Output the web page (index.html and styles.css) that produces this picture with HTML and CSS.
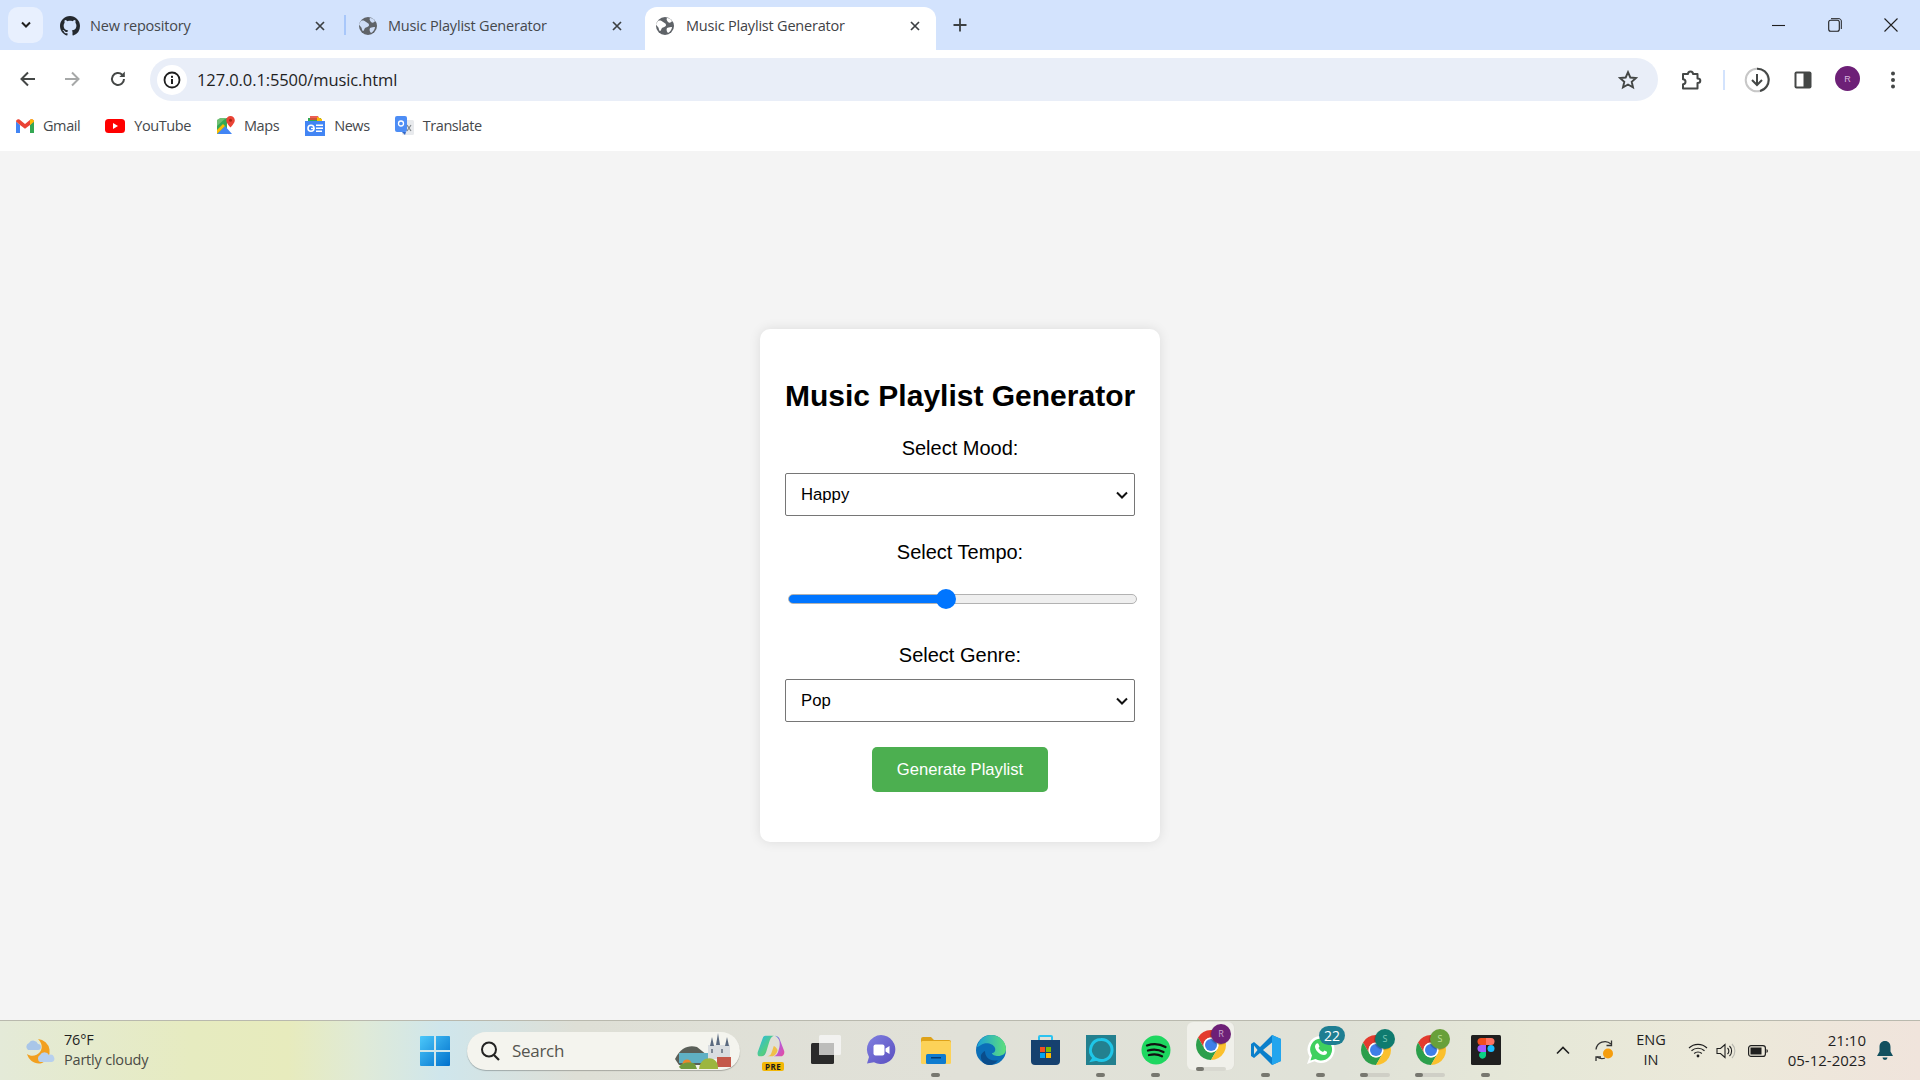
FILE: index.html
```html
<!DOCTYPE html>
<html lang="en">
<head>
<meta charset="utf-8">
<title>Music Playlist Generator</title>
<link rel="stylesheet" href="styles.css">
</head>
<body>
<svg class="defs" width="0" height="0">
  <symbol id="globe" viewBox="0 0 20 20">
    <circle cx="10" cy="10" r="9" fill="#5f6368"/>
    <path d="M3 5c2-1 4 0 5 1s3 1 3 3-3 2-4 3-1 3-2 3-1-3-2-4-2-2-2-3zM12 2c2 0 4 1 5 3-1 2-3 2-4 1s-2-3-1-4zM12 12c2-1 4-1 5-1 0 2-2 5-4 6-1-1-2-3-1-5z" fill="#d3e3fd" opacity=".95"/>
  </symbol>
  <symbol id="globe-w" viewBox="0 0 20 20">
    <circle cx="10" cy="10" r="9" fill="#5f6368"/>
    <path d="M3 5c2-1 4 0 5 1s3 1 3 3-3 2-4 3-1 3-2 3-1-3-2-4-2-2-2-3zM12 2c2 0 4 1 5 3-1 2-3 2-4 1s-2-3-1-4zM12 12c2-1 4-1 5-1 0 2-2 5-4 6-1-1-2-3-1-5z" fill="#fff"/>
  </symbol>
  <symbol id="x" viewBox="0 0 12 12">
    <path d="M2 2l8 8M10 2l-8 8" stroke="#3c4043" stroke-width="1.7" fill="none"/>
  </symbol>
  <symbol id="chrome" viewBox="4 4 40 40">
    <path d="M24 4A20 20 0 0 1 41.32 14H24A10 10 0 0 0 15.34 29L6.68 14A20 20 0 0 1 24 4Z" fill="#e33b2e"/>
    <path d="M6.68 14A20 20 0 0 0 24 44L32.66 29A10 10 0 0 1 15.34 29Z" fill="#2c9f4b"/>
    <path d="M41.32 14A20 20 0 0 1 24 44L32.66 29A10 10 0 0 0 24 14Z" fill="#fbc02d"/>
    <circle cx="24" cy="24" r="10" fill="#fff"/>
    <circle cx="24" cy="24" r="8" fill="#3f7fe8"/>
  </symbol>
</svg>

<header class="tabstrip">
  <button class="tab-search" type="button" aria-label="Search tabs">
    <svg width="12" height="8" viewBox="0 0 12 8"><path d="M2 1.500l4 4 4-4" stroke="#1f1f1f" stroke-width="2" fill="none"/></svg>
  </button>
  <div class="tab tab-first">
    <svg class="favicon" width="20" height="20" viewBox="0 0 16 16"><path fill="#24292f" d="M8 0C3.58 0 0 3.58 0 8c0 3.54 2.29 6.53 5.47 7.59.4.07.55-.17.55-.38 0-.19-.01-.82-.01-1.49-2.01.37-2.53-.49-2.69-.94-.09-.23-.48-.94-.82-1.13-.28-.15-.68-.52-.01-.53.63-.01 1.08.58 1.23.82.72 1.21 1.87.87 2.33.66.07-.52.28-.87.51-1.07-1.78-.2-3.64-.89-3.64-3.95 0-.87.31-1.59.82-2.15-.08-.2-.36-1.02.08-2.12 0 0 .67-.21 2.2.82.64-.18 1.32-.27 2-.27s1.36.09 2 .27c1.53-1.04 2.2-.82 2.2-.82.44 1.1.16 1.92.08 2.12.51.56.82 1.27.82 2.15 0 3.07-1.87 3.75-3.65 3.95.29.25.54.73.54 1.48 0 1.07-.01 1.93-.01 2.2 0 .21.15.46.55.38A8.01 8.01 0 0 0 16 8c0-4.42-3.58-8-8-8z"/></svg>
    <span class="tab-title">New repository</span>
    <svg class="tab-close" width="12" height="12"><use href="#x"/></svg>
  </div>
  <i class="tab-sep"></i>
  <div class="tab tab-second">
    <svg class="favicon" width="20" height="20"><use href="#globe"/></svg>
    <span class="tab-title">Music Playlist Generator</span>
    <svg class="tab-close" width="12" height="12"><use href="#x"/></svg>
  </div>
  <div class="tab tab-active">
    <svg class="favicon" width="20" height="20"><use href="#globe-w"/></svg>
    <span class="tab-title">Music Playlist Generator</span>
    <svg class="tab-close" width="12" height="12"><use href="#x"/></svg>
  </div>
  <svg class="new-tab" width="16" height="16" viewBox="0 0 16 16"><path d="M8 1.500v13M1.500 8h13" stroke="#3c4043" stroke-width="1.800"/></svg>
  <div class="window-controls">
    <svg width="14" height="14" viewBox="0 0 14 14"><path d="M0 7.500h13" stroke="#1f1f1f" stroke-width="1.100"/></svg>
    <svg width="14" height="14" viewBox="0 0 14 14"><rect x=".7" y="2.200" width="10.600" height="11" rx="2" fill="none" stroke="#1f1f1f" stroke-width="1.100"/><path d="M3 .7h8c1.300 0 2.300 1 2.300 2.300v8" fill="none" stroke="#1f1f1f" stroke-width="1"/></svg>
    <svg width="14" height="14" viewBox="0 0 14 14"><path d="M.5.5l13 13M13.500.5l-13 13" stroke="#1f1f1f" stroke-width="1.100"/></svg>
  </div>
</header>

<nav class="toolbar">
  <svg class="nav-btn" width="18" height="18" viewBox="0 0 18 18"><path d="M16 9H3M9 2.500L2.500 9 9 15.500" stroke="#444746" stroke-width="2" fill="none"/></svg>
  <svg class="nav-btn" width="18" height="18" viewBox="0 0 18 18"><path d="M2 9h13M9 2.500L15.500 9 9 15.500" stroke="#a6a8a8" stroke-width="2" fill="none"/></svg>
  <svg class="nav-btn" width="18" height="18" viewBox="0 0 18 18"><path d="M15 9a6 6 0 1 1-1.800-4.300" stroke="#444746" stroke-width="2" fill="none"/><path d="M15.800 1.500v5.500h-5.500z" fill="#444746"/></svg>
  <div class="omnibox">
    <span class="site-info">
      <svg width="18" height="18" viewBox="0 0 18 18"><circle cx="9" cy="9" r="7.500" fill="none" stroke="#1f1f1f" stroke-width="1.800"/><rect x="8" y="8" width="2" height="5" fill="#1f1f1f"/><rect x="8" y="4.800" width="2" height="2" fill="#1f1f1f"/></svg>
    </span>
    <span class="url">127.0.0.1:5500/music.html</span>
    <svg class="star" width="20" height="20" viewBox="0 0 20 20"><path d="M10 2.200l2.300 5.300 5.700.5-4.300 3.800 1.300 5.600L10 14.500 5 17.400l1.300-5.600L2 8l5.700-.5z" fill="none" stroke="#444746" stroke-width="1.900"/></svg>
  </div>
  <div class="toolbar-actions">
    <svg class="act-puzzle" width="22" height="22" viewBox="0 0 22 22"><path d="M3 5h5c0-1.500.8-2.500 2.500-2.500S13 3.500 13 5h4.500v4.500c1.800 0 2.800 1 2.800 2.300s-1 2.300-2.800 2.300V19.500H3v-4.300c1.700 0 2.500-1 2.500-2.400S4.700 10.300 3 10.300z" fill="none" stroke="#444746" stroke-width="2" stroke-linejoin="round"/></svg>
    <i class="act-sep"></i>
    <svg class="act-dl" width="26" height="26" viewBox="0 0 26 26"><circle cx="13" cy="13" r="11.300" fill="none" stroke="#c7c7c7" stroke-width="2"/><path d="M13 1.700A11.300 11.300 0 0 1 16 24" fill="none" stroke="#444746" stroke-width="2"/><path d="M13 7v11M8 13l5 5 5-5" fill="none" stroke="#444746" stroke-width="2"/></svg>
    <svg class="act-panel" width="18" height="18" viewBox="0 0 18 18"><rect x=".5" y=".5" width="17" height="17" rx="2" fill="#444746"/><rect x="2.500" y="2.500" width="7" height="13" fill="#fff"/></svg>
    <span class="avatar">R</span>
    <svg class="act-menu" width="6" height="20" viewBox="0 0 6 20"><circle cx="3" cy="3.500" r="2" fill="#444746"/><circle cx="3" cy="10" r="2" fill="#444746"/><circle cx="3" cy="16.500" r="2" fill="#444746"/></svg>
  </div>
</nav>

<div class="bookmarks">
  <a class="bm bm-gmail">
    <svg width="18" height="14" viewBox="0 0 18 14"><path d="M0 2.500V14h4V6z" fill="#4285f4"/><path d="M18 2.500V14h-4V6z" fill="#34a853"/><path d="M0 2.500C0 .5 2 -.5 3.500.6L9 5l5.500-4.400C16-.5 18 .5 18 2.500L14 6 9 9.800 4 6z" fill="#ea4335"/><path d="M14 .9l.5-.3C16-.5 18 .5 18 2.500L14 6z" fill="#fbbc04"/></svg>
    <span>Gmail</span>
  </a>
  <a class="bm bm-yt">
    <svg width="20" height="14" viewBox="0 0 20 14"><rect width="20" height="14" rx="3.500" fill="#f00"/><path d="M8 4l5 3-5 3z" fill="#fff"/></svg>
    <span>YouTube</span>
  </a>
  <a class="bm bm-maps">
    <svg width="18" height="20" viewBox="0 0 18 20"><path d="M0 4l10-2v16H0z" fill="#34a853"/><path d="M0 18l8-8 7 8z" fill="#4285f4"/><path d="M0 18V14l6-6 2 2z" fill="#fbbc04"/><path d="M3 2h6L0 10V4z" fill="#6fbf73"/><path d="M13.500 0a4.300 4.300 0 0 1 4.300 4.300c0 3-4.300 7.200-4.300 7.200S9.200 7.300 9.200 4.300A4.300 4.300 0 0 1 13.500 0z" fill="#ea4335"/><circle cx="13.500" cy="4.300" r="1.500" fill="#a52714"/></svg>
    <span>Maps</span>
  </a>
  <a class="bm bm-news">
    <svg width="20" height="20" viewBox="0 0 20 20"><path d="M3 2h13v5H3z" fill="#34a853"/><path d="M5 0h8l2 4H5z" fill="#ea4335" opacity=".85"/><path d="M12 1l5 2v4h-5z" fill="#fbbc04"/><rect y="5" width="20" height="15" fill="#4285f4"/><rect x="11" y="8.500" width="7" height="1.500" fill="#fff"/><rect x="11" y="11.500" width="7" height="1.500" fill="#fff"/><rect x="11" y="14.500" width="6" height="1.500" fill="#fff"/><circle cx="6" cy="12.300" r="3" fill="none" stroke="#fff" stroke-width="1.600"/><rect x="6" y="11.800" width="3.500" height="1.300" fill="#fff"/></svg>
    <span>News</span>
  </a>
  <a class="bm bm-translate">
    <svg width="19" height="20" viewBox="0 0 19 20"><rect x="7" y="4" width="12" height="15" rx="1.500" fill="#e8eaed"/><rect width="12" height="16" rx="2" fill="#4d8df5"/><path d="M7 16l3 3 1-3z" fill="#3367c6"/><circle cx="6" cy="7.500" r="2.500" fill="none" stroke="#fff" stroke-width="1.300"/><path d="M12 9l4 6M16 9l-4 6" stroke="#80868b" stroke-width="1.200"/></svg>
    <span>Translate</span>
  </a>
</div>

<main class="page">
  <section class="card">
    <h1 class="card-title">Music Playlist Generator</h1>
    <label class="field-label label-mood" for="mood">Select Mood:</label>
    <select class="field-select" id="mood"><option>Happy</option><option>Sad</option><option>Energetic</option></select>
    <label class="field-label label-tempo" for="tempo">Select Tempo:</label>
    <input class="tempo-range" id="tempo" type="range" min="0" max="100" value="45">
    <label class="field-label label-genre" for="genre">Select Genre:</label>
    <select class="field-select" id="genre"><option>Pop</option><option>Rock</option><option>Jazz</option></select>
    <button class="generate" type="button">Generate Playlist</button>
  </section>
</main>

<footer class="taskbar">
  <div class="weather">
    <svg width="32" height="30" viewBox="0 0 32 30"><path d="M14 3a12.500 12.500 0 0 1 4 24C12 29 5 25 3 18c4 3 10 2 13-2s2-9-2-13z" fill="#f2a01f"/><path d="M4 14a4 4 0 0 1 1-7 5 5 0 0 1 9 1 3 3 0 0 1 0 6z" fill="#a9c6e8"/><path d="M16 26a4 4 0 0 1 0-7 5 5 0 0 1 9 0 3.500 3.500 0 0 1 3 7z" fill="#b7d0ee"/></svg>
    <div class="weather-text">
      <span class="temp">76°F</span>
      <span class="cond">Partly cloudy</span>
    </div>
  </div>
  <svg class="winlogo" width="30" height="30" viewBox="0 0 30 30"><defs><linearGradient id="wl" x1="0" y1="0" x2="1" y2="1"><stop offset="0" stop-color="#4cc8fa"/><stop offset="1" stop-color="#0070cc"/></linearGradient></defs><path d="M1 0h13v14H0V1a1 1 0 0 1 1-1zM16 0h13a1 1 0 0 1 1 1v13H16zM0 16h14v14H1a1 1 0 0 1-1-1zM16 16h14v13a1 1 0 0 1-1 1H16z" fill="url(#wl)"/></svg>
  <div class="search">
    <svg width="22" height="22" viewBox="0 0 22 22"><circle cx="10" cy="9.500" r="7" fill="none" stroke="#222" stroke-width="2"/><path d="M15 15l5 5" stroke="#222" stroke-width="2.200"/></svg>
    <span class="search-text">Search</span>
    <svg class="search-art" width="64" height="36" viewBox="0 0 64 36"><path d="M0 26c6-12 14-14 22-12l10 8v10H4z" fill="#5a5f58"/><rect x="4" y="20" width="30" height="10" fill="#5fb0c4"/><rect x="33" y="12" width="22" height="14" fill="#d9dde0"/><path d="M35 13l2-9 2 9zM41 12l2-12 2 12zM50 13l2-9 2 9z" fill="#5a6a80"/><rect x="36" y="16" width="2" height="4" fill="#7d8794"/><rect x="46" y="16" width="2" height="4" fill="#7d8794"/><rect x="42" y="24" width="14" height="10" fill="#c4584a"/><path d="M24 36c1-10 9-12 14-10s5 8 5 10z" fill="#9cb63f"/><circle cx="12" cy="31" r="4.500" fill="#e8872b"/><path d="M4 34c2-4 10-6 16-3l2 5H6z" fill="#6f9a3c"/></svg>
  </div>
  <div class="apps">
    <div class="app">
      <svg class="copilot" width="28" height="22" viewBox="0 0 30 22"><defs><linearGradient id="cpl" x1="0" y1="0" x2="1" y2="1"><stop offset="0" stop-color="#28b8ea"/><stop offset=".6" stop-color="#55cf7f"/><stop offset="1" stop-color="#2a7fd0"/></linearGradient><linearGradient id="cpr" x1="0" y1="0" x2="1" y2="1"><stop offset="0" stop-color="#2f8fe0"/><stop offset=".5" stop-color="#b85ad8"/><stop offset="1" stop-color="#e84c9c"/></linearGradient></defs><path d="M9 0h9c-3 1-4 4-5 7l-3 10c-1 3-2 5-5 5H3c-2 0-3-2-2-5L6 3c.5-2 1.500-3 3-3z" fill="url(#cpl)"/><path d="M19 0c2 0 4 1 5 3l5 13c1 3-1 6-3 6h-8c3-1 4-3 5-6l1-4c1-5 0-10-5-12z" fill="url(#cpr)"/><path d="M11 22c3 0 4-2 5-5l2-6c2 1 4 3 4 5-1 3-3 6-6 6z" fill="#f0c04a"/></svg>
      <span class="pre-badge">PRE</span>
    </div>
    <div class="app">
      <svg width="30" height="30" viewBox="0 0 30 30"><rect x="8" y="0" width="22" height="20" rx="1.500" fill="#f2f2f0"/><rect x="0" y="8" width="23" height="21" rx="1.500" fill="#2a2a2a"/><rect x="8" y="8" width="15" height="12" fill="#bdbdbb"/></svg>
    </div>
    <div class="app">
      <svg width="30" height="30" viewBox="0 0 30 30"><defs><linearGradient id="ch" x1="0" y1="0" x2="1" y2="1"><stop offset="0" stop-color="#7f7fe0"/><stop offset="1" stop-color="#5b4fc0"/></linearGradient></defs><path d="M15 0a14.500 14.500 0 1 1-7 27.300L1 28.500 3 22A14.500 14.500 0 0 1 15 0z" fill="url(#ch)"/><rect x="7.500" y="9.500" width="11" height="11" rx="2" fill="#fff"/><path d="M19.500 13.500l4-2.500v8l-4-2.500z" fill="#fff"/></svg>
    </div>
    <div class="app has-dot">
      <svg width="30" height="27" viewBox="0 0 30 27"><path d="M0 2a2 2 0 0 1 2-2h8l3 3h15a2 2 0 0 1 2 2v3H0z" fill="#dea219"/><rect y="4" width="30" height="23" rx="1.500" fill="#fcd258"/><rect x="5" y="17" width="20" height="10" rx="1.500" fill="#0f7ccf"/><rect x="10" y="20" width="10" height="1.500" fill="#053c73"/></svg>
    </div>
    <div class="app">
      <svg width="30" height="30" viewBox="0 0 30 30"><defs><linearGradient id="ed" x1="0" y1="0" x2="1" y2="0"><stop offset="0" stop-color="#1aa0d8"/><stop offset="1" stop-color="#5ee07a"/></linearGradient></defs><circle cx="15" cy="15" r="15" fill="#0b6fb8"/><path d="M1 12C3 4 9 0 15 0c9 0 15 7 15 14 0 5-4 7-8 7-3 0-6-1-6-3 2 0 4-2 3-5-2-5-10-6-14-3-2 1-3 2-4 2z" fill="url(#ed)"/><path d="M9 16c0 7 6 11 13 9-2 3-5 5-9 5-6 0-9-6-8-10 1-2 2-3 4-4z" fill="#0a4d8c"/></svg>
    </div>
    <div class="app">
      <svg width="29" height="30" viewBox="0 0 29 30"><path d="M8 5V2a1 1 0 0 1 1-1h11a1 1 0 0 1 1 1v3" fill="none" stroke="#2cc3f0" stroke-width="2"/><path d="M0 5h29v21a4 4 0 0 1-4 4H4a4 4 0 0 1-4-4z" fill="#16416f"/><rect x="9" y="12" width="5" height="5" fill="#f25022"/><rect x="15" y="12" width="5" height="5" fill="#7fba00"/><rect x="9" y="18" width="5" height="5" fill="#00a4ef"/><rect x="15" y="18" width="5" height="5" fill="#ffb900"/></svg>
    </div>
    <div class="app has-dot">
      <svg width="30" height="30" viewBox="0 0 30 30"><rect width="30" height="30" fill="#23808f"/><path d="M15 4.500a10.500 10.500 0 0 0-7 18.300L6.500 25l4-.8A10.500 10.500 0 1 0 15 4.500z" fill="none" stroke="#1fc6e8" stroke-width="3"/></svg>
    </div>
    <div class="app has-dot">
      <svg width="30" height="30" viewBox="0 0 30 30"><circle cx="15" cy="15" r="14.500" fill="#1ed760"/><path d="M6 10.500c6-2 13-1.500 18.500 1.500M7 15.500c5-1.500 11-1 15.500 1.500M8 20c4-1 9-1 13 1.200" fill="none" stroke="#111" stroke-width="2.300" stroke-linecap="round"/></svg>
    </div>
    <div class="app app-active has-track">
      <svg width="30" height="30"><use href="#chrome"/></svg>
      <span class="win-badge badge-purple">R</span>
    </div>
    <div class="app has-dot">
      <svg width="30" height="30" viewBox="0 0 30 30"><path d="M21 0l9 4v22l-9 4L9 18l-6 5-3-2v-12l3-2 6 5z" fill="#0a7fcb"/><path d="M21 0l9 4v22l-9 4z" fill="#22a5ee"/><path d="M21 7.500v15L12 15z" fill="#e2e2d9"/><path d="M3 10.500L6.500 15 3 19.500z" fill="#e2e2d9"/></svg>
    </div>
    <div class="app has-dot">
      <svg width="30" height="30" viewBox="0 0 30 30"><path d="M15 1a13.500 13.500 0 1 1-6.500 25.300L1 29l2.600-7.300A13.500 13.500 0 0 1 15 1z" fill="#fff"/><path d="M15 3.500a11 11 0 1 1-5.500 20.500l-5 1.400L6 20.500A11 11 0 0 1 15 3.500z" fill="#3fd05f"/><path d="M10 9c1-1 2-1 2.500 0l1 2.500-1 1.500c1 2 2.500 3 4.500 4l1.500-1.500 2.500 1.200c.5 2-1.500 3.300-3 3.300-4.500 0-9-5-9-8.500 0-1 .4-1.800 1-2.500z" fill="#fff"/></svg>
      <span class="count-badge">22</span>
    </div>
    <div class="app has-track">
      <svg width="30" height="30"><use href="#chrome"/></svg>
      <span class="win-badge badge-teal">S</span>
    </div>
    <div class="app has-track">
      <svg width="30" height="30"><use href="#chrome"/></svg>
      <span class="win-badge badge-green">S</span>
    </div>
    <div class="app has-dot">
      <svg width="30" height="30" viewBox="0 0 30 30"><rect width="30" height="30" rx="1.500" fill="#1f1f1f"/><path d="M10 3h5v7h-5a3.500 3.500 0 0 1 0-7z" fill="#f24e1e"/><path d="M15 3h5a3.500 3.500 0 0 1 0 7h-5z" fill="#ff7262"/><path d="M10 10h5v7h-5a3.500 3.500 0 0 1 0-7z" fill="#a259ff"/><circle cx="20" cy="13.500" r="3.500" fill="#1abcfe"/><path d="M10 17h5v3.500a3.500 3.500 0 1 1-5-3.500z" fill="#0acf83"/></svg>
    </div>
  </div>
  <div class="tray">
    <svg class="tray-up" width="14" height="9" viewBox="0 0 14 9"><path d="M1 7.500l6-6 6 6" fill="none" stroke="#1f1f1f" stroke-width="1.600"/></svg>
    <svg class="tray-sync" width="22" height="22" viewBox="0 0 22 22"><path d="M3 9.500A9 9 0 0 1 18 4" fill="none" stroke="#333" stroke-width="1.300"/><path d="M18.500.500V5.500h-5M3 21v-4h5" fill="none" stroke="#333" stroke-width="1.300"/><path d="M4 17a9 9 0 0 0 8 1" fill="none" stroke="#333" stroke-width="1.300"/><circle cx="15" cy="13.500" r="5" fill="#f59d0e"/></svg>
    <div class="lang"><span>ENG</span><span>IN</span></div>
    <svg class="tray-wifi" width="20" height="15" viewBox="0 0 20 15"><path d="M1 5a13 13 0 0 1 18 0M3.500 7.800a9.500 9.500 0 0 1 13 0M6.200 10.500a5.500 5.500 0 0 1 7.600 0" fill="none" stroke="#1f1f1f" stroke-width="1.200"/><circle cx="10" cy="13" r="1.400" fill="#1f1f1f"/></svg>
    <svg class="tray-vol" width="20" height="16" viewBox="0 0 20 16"><path d="M1 5.500h3.500L9 1.500v13l-4.500-4H1z" fill="none" stroke="#1f1f1f" stroke-width="1.100"/><path d="M11.500 5a4 4 0 0 1 0 6M13.500 3a7 7 0 0 1 0 10" fill="none" stroke="#1f1f1f" stroke-width="1.100"/><path d="M16 1a10 10 0 0 1 0 14" fill="none" stroke="#b8b8b0" stroke-width="1.100"/></svg>
    <svg class="tray-bat" width="20" height="12" viewBox="0 0 20 12"><rect x=".6" y=".6" width="16.800" height="10.800" rx="2.500" fill="none" stroke="#1f1f1f" stroke-width="1.200"/><rect x="2.500" y="2.500" width="11" height="7" fill="#1f1f1f"/><path d="M18.500 4l1.300 1v2l-1.300 1z" fill="#1f1f1f"/></svg>
    <div class="clock"><span>21:10</span><span>05-12-2023</span></div>
    <svg class="tray-bell" width="18" height="20" viewBox="0 0 18 20"><path d="M9 0c3.500 0 5.500 2.500 5.500 6v4.500L17 15H1l2.500-4.500V6C3.500 2.500 5.500 0 9 0z" fill="#12505f"/><path d="M6.500 16.500h5a2.500 2.500 0 0 1-5 0z" fill="#12505f"/></svg>
  </div>
</footer>
</body>
</html>
```
FILE: styles.css
```css
* { box-sizing: border-box; }
html, body { height: 100%; }
body {
  margin: 0;
  height: 1080px;
  overflow: hidden;
  display: flex;
  flex-direction: column;
  font-family: "Liberation Sans", Arial, sans-serif;
  background: #f4f4f4;
}
.defs { position: absolute; }

/* tab strip */
.tabstrip {
  height: 50px;
  flex: none;
  display: flex;
  align-items: center;
  background: #d3e3fd;
  font-family: "Open Sans", sans-serif;
  font-size: 14.500px;
  letter-spacing: -.2px;
  color: #45484c;
}
.tab-search {
  width: 35px;
  height: 36px;
  margin: 0 0 0 8px;
  padding: 0;
  border: 0;
  border-radius: 10px;
  background: #e8f0fe;
  display: flex;
  align-items: center;
  justify-content: center;
  flex: none;
}
.tab {
  display: flex;
  align-items: center;
  flex: none;
  height: 43px;
  align-self: flex-end;
  padding-bottom: 6px;
}
.tab-first { width: 285px; margin-left: 17px; }
.tab-first .tab-title { margin-left: 10px; }
.tab-first .favicon { flex: none; }
.tab-first .tab-close { margin-left: auto; margin-right: 19px; }
.tab-sep { width: 2px; height: 20px; background: #a8c7fa; flex: none; margin-right: 12px; margin-left: -1px; }
.tab-second { width: 288px; }
.tab-second .tab-title { margin-left: 10px; }
.tab-second .tab-close { margin-left: auto; margin-right: 23px; }
.tab-active {
  width: 291px;
  background: #fff;
  border-radius: 12px 12px 0 0;
  padding-left: 10px;
  margin-left: -1px;
  color: #3f4246;
}
.tab-active .favicon { margin-right: 11px; }
.tab-active .tab-close { margin-left: auto; margin-right: 15px; }
.tab-close { flex: none; }
.new-tab { margin-left: 16px; flex: none; }
.window-controls {
  margin-left: auto;
  display: flex;
  align-items: center;
  gap: 42px;
  padding-right: 22px;
}

/* toolbar */
.toolbar {
  height: 51px;
  flex: none;
  display: flex;
  align-items: flex-end;
  background: #fff;
  padding-left: 19px;
}
.nav-btn { margin-right: 27px; margin-bottom: 13px; flex: none; }
.nav-btn:nth-child(1) { margin-right: 26px; }
.nav-btn:nth-child(2) { margin-right: 28px; }
.nav-btn:nth-child(3) { margin-right: 23px; }
.omnibox {
  width: 1508px;
  height: 43px;
  background: #e9eef8;
  border-radius: 22px;
  display: flex;
  align-items: center;
  flex: none;
  padding-left: 7px;
  font-family: "Open Sans", sans-serif;
}
.site-info {
  width: 30px;
  height: 30px;
  border-radius: 50%;
  background: #fff;
  display: flex;
  align-items: center;
  justify-content: center;
}
.url { margin-left: 10px; font-size: 16.500px; color: #1f1f1f; letter-spacing: -.1px; }
.star { margin-left: auto; margin-right: 20px; }
.toolbar-actions {
  flex: 1;
  height: 43px;
  display: flex;
  align-items: center;
}
.act-puzzle { margin-left: 22px; }
.act-sep { width: 2px; height: 20px; background: #d3e3fd; margin-left: 21px; }
.act-dl { margin-left: 19px; }
.act-panel { margin-left: 24px; }
.avatar {
  width: 25px;
  height: 25px;
  margin-left: 23px;
  margin-bottom: 2px;
  border-radius: 50%;
  background: #6d2077;
  color: #d9b7dd;
  font-size: 9px;
  display: flex;
  align-items: center;
  justify-content: center;
  flex: none;
}
.act-menu { margin-left: 30px; }

/* bookmarks */
.bookmarks {
  height: 50px;
  flex: none;
  display: flex;
  align-items: center;
  background: #fff;
  padding-bottom: 1px;
  font-family: "Open Sans", sans-serif;
  font-size: 14.500px;
  color: #45484c;
  letter-spacing: -.42px;
}
.bm { display: flex; align-items: center; gap: 9px; }
.bm-gmail { margin-left: 16px; }
.bm-yt { margin-left: 25px; }
.bm-maps { margin-left: 26px; }
.bm-news { margin-left: 26px; }
.bm-translate { margin-left: 25px; }

/* page */
.page {
  flex: 1;
  display: flex;
  align-items: center;
  justify-content: center;
  background: #f4f4f4;
}
.card {
  width: 400px;
  padding: 48px 25px 50px;
  display: flex;
  flex-direction: column;
  align-items: stretch;
  background: #fff;
  border-radius: 10px;
  box-shadow: 0 0 12px rgba(0, 0, 0, .1);
}
.card-title {
  margin: 0 0 23px;
  font-size: 30px;
  line-height: 37px;
  font-weight: 700;
  text-align: center;
  color: #000;
  white-space: nowrap;
}
.field-label {
  display: block;
  font-size: 20px;
  line-height: 23px;
  text-align: center;
  color: #000;
  margin-bottom: 13px;
}
.label-tempo { margin-top: 25px; margin-bottom: 25px; }
.label-genre { margin-top: 35px; margin-bottom: 12px; }
.field-select {
  -webkit-appearance: none;
  appearance: none;
  height: 43px;
  width: 100%;
  padding: 0 15px;
  font-family: "Liberation Sans", Arial, sans-serif;
  font-size: 16.700px;
  color: #000;
  background-color: #fff;
  background-image: url("data:image/svg+xml,%3Csvg xmlns='http://www.w3.org/2000/svg' width='12' height='8' viewBox='0 0 12 8'%3E%3Cpath d='M1 1.500l5 5 5-5' fill='none' stroke='%23111' stroke-width='2'/%3E%3C/svg%3E");
  background-repeat: no-repeat;
  background-position: right 6px center;
  border: 1px solid #767676;
  border-radius: 2px;
}
.tempo-range {
  -webkit-appearance: none;
  appearance: none;
  width: 349px;
  height: 20px;
  margin: 0 0 0 3px;
  background: transparent;
}
.tempo-range::-webkit-slider-runnable-track {
  height: 10px;
  border: 1px solid #b2b2b2;
  border-radius: 5px;
  background: linear-gradient(to right, #0075ff 0, #0075ff 157px, #efefef 157px);
}
.tempo-range::-webkit-slider-thumb {
  -webkit-appearance: none;
  width: 20px;
  height: 20px;
  margin-top: -6px;
  border-radius: 50%;
  background: #0075ff;
  border: 0;
}
.generate {
  align-self: center;
  width: 176px;
  height: 45px;
  margin-top: 25px;
  padding: 0;
  border: 0;
  border-radius: 5px;
  background: #4caf50;
  color: #fff;
  font-family: "Liberation Sans", Arial, sans-serif;
  font-size: 16.600px;
}

/* taskbar */
.taskbar {
  height: 60px;
  flex: none;
  display: flex;
  align-items: center;
  border-top: 1px solid #b9b9ae;
  background: linear-gradient(90deg, #e4ead8 0, #e6ebc0 10%, #e7ebbd 15%, #dfead8 19%, #cfe6ec 23%, #dedfd6 30%, #e1e1d8 50%, #e0e2d8 70%, #e6e8d8 80%, #ece9da 90%, #f0e4dc 100%);
  font-family: "Open Sans", sans-serif;
  color: #1f1f1f;
  position: relative;
}
.weather { display: flex; align-items: center; width: 420px; padding-left: 24px; flex: none; }
.weather-text { display: flex; flex-direction: column; margin-left: 8px; margin-top: -2px; font-size: 14.500px; line-height: 20px; letter-spacing: -.2px; }
.cond { color: #4a4a45; }
.winlogo { flex: none; margin-top: 1px; }
.search {
  width: 273px;
  height: 38px;
  margin-left: 17px;
  border-radius: 19px;
  background: #f4f4ee;
  box-shadow: 0 1px 1px rgba(0, 0, 0, .25);
  display: flex;
  align-items: center;
  padding-left: 12px;
  flex: none;
}
.search-text { margin-left: 11px; font-size: 17px; color: #55554f; letter-spacing: -.3px; }
.search-art { margin-left: auto; margin-right: 1px; }
.apps { display: flex; margin-left: 3px; flex: none; }
.app {
  width: 55px;
  height: 58px;
  display: flex;
  align-items: center;
  justify-content: center;
  position: relative;
  flex: none;
}
.app > svg { margin-top: -1px; }
.app > .copilot { margin-top: -9px; }
.has-dot::after, .has-track::after {
  content: "";
  position: absolute;
  bottom: 3px;
  left: 23px;
  width: 9px;
  height: 4px;
  border-radius: 2px;
  background: #77776f;
}
.has-track::before {
  content: "";
  position: absolute;
  bottom: 3px;
  left: 12px;
  width: 30px;
  height: 4px;
  border-radius: 2px;
  background: #cfcfc6;
}
.has-track::after { left: 12px; width: 8px; }
.app-active {
  width: 47px;
  height: 48px;
  margin: 0 4px;
  border-radius: 6px;
  background: #f0f0ea;
  box-shadow: 1px 0 0 #deded6;
}
.app-active.has-track::before { left: 9px; bottom: -1px; background: #d8d8d0; }
.app-active.has-track::after { left: 9px; bottom: -1px; }
.pre-badge {
  position: absolute;
  left: 19px;
  bottom: 9px;
  padding: 0 3px;
  border-radius: 2px;
  background: #f2b705;
  color: #1a1a1a;
  font-size: 8px;
  font-weight: 700;
  line-height: 9px;
  letter-spacing: .5px;
}
.win-badge {
  position: absolute;
  top: 7px;
  right: 8px;
  width: 20px;
  height: 20px;
  border-radius: 50%;
  font-size: 9px;
  display: flex;
  align-items: center;
  justify-content: center;
  box-shadow: -1px 1px 1px rgba(0, 0, 0, .25);
}
.app-active .win-badge { top: 2px; right: 3px; }
.badge-purple { background: #6d2077; color: #c9a6ce; }
.badge-teal { background: #0f7b6f; color: #7ec9b8; }
.badge-green { background: #68a03a; color: #bfe19d; }
.count-badge {
  position: absolute;
  top: 4px;
  left: 26px;
  min-width: 26px;
  height: 19px;
  padding: 0 4px;
  border-radius: 10px;
  background: #1e7e92;
  color: #fff;
  font-size: 14px;
  line-height: 19px;
  text-align: center;
}
.tray {
  position: absolute;
  left: 1556px;
  top: 0;
  right: 0;
  height: 100%;
  display: flex;
  align-items: center;
}
.tray-up { flex: none; }
.tray-sync { margin-left: 23px; flex: none; }
.lang { display: flex; flex-direction: column; align-items: center; width: 36px; margin-left: 18px; margin-top: -2px; font-size: 14.500px; line-height: 20px; }
.tray-wifi { margin-left: 19px; flex: none; }
.tray-vol { margin-left: 8px; flex: none; }
.tray-bat { margin-left: 12px; flex: none; }
.clock { display: flex; flex-direction: column; align-items: flex-end; width: 88px; margin-left: 10px; margin-top: -2px; font-size: 15px; line-height: 20px; }
.tray-bell { margin-left: 10px; flex: none; }
```
